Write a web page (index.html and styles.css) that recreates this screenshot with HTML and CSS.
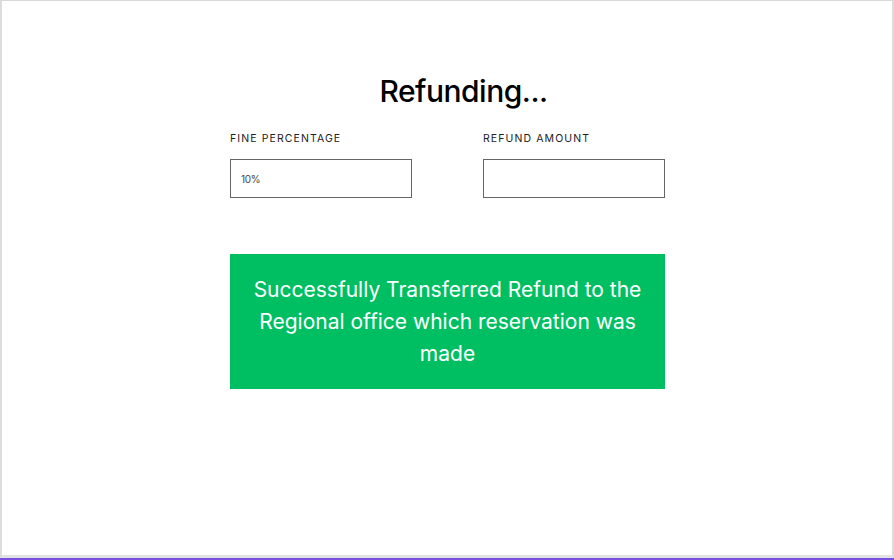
FILE: index.html
```html
<!DOCTYPE html>
<html>
<head>
<meta charset="utf-8">
<link rel="stylesheet" href="styles.css">
</head>
<body>
<div class="frame">
  <div class="content">
    <h1 class="title">Refunding...</h1>
    <div class="fields">
      <div class="field">
        <label class="label">FINE PERCENTAGE</label>
        <div class="input">10%</div>
      </div>
      <div class="field">
        <label class="label">REFUND AMOUNT</label>
        <div class="input"></div>
      </div>
    </div>
    <div class="notice">Successfully Transferred Refund to the Regional office which reservation was made</div>
  </div>
</div>
</body>
</html>
```
FILE: styles.css
```css
html, body {
  margin: 0;
  padding: 0;
  width: 894px;
  height: 560px;
  overflow: hidden;
  background: #ffffff;
}
body {
  border-bottom: 2px solid #7b4fe0;
  box-sizing: border-box;
}
.frame {
  box-sizing: border-box;
  height: 558px;
  border-top: 1px solid #d9d9d9;
  border-left: 2px solid #dcdcdc;
  border-right: 2px solid #dcdcdc;
  border-bottom: 3px solid #e2e2e2;
  background: #fff;
  display: flex;
  justify-content: center;
}
.content {
  width: 435px;
  margin-left: 1px;
  display: flex;
  flex-direction: column;
}
.title {
  margin: 68px 0 0 32px;
  text-align: center;
  font-family: "Inter", "Open Sans", sans-serif;
  font-weight: 500;
  font-size: 30px;
  line-height: 44px;
  color: #000;
  letter-spacing: -0.5px;
}
.fields {
  margin-top: 19px;
  display: flex;
  justify-content: space-between;
}
.field {
  width: 182px;
  display: flex;
  flex-direction: column;
}
.label {
  font-family: "Inter", sans-serif;
  font-size: 10.5px;
  letter-spacing: 1.1px;
  color: #222;
  line-height: 14px;
}
.input {
  margin-top: 13px;
  box-sizing: border-box;
  height: 39px;
  border: 1px solid #666;
  padding: 0 10px;
  display: flex;
  align-items: center;
  font-family: "Inter", sans-serif;
  font-size: 10px;
  color: #444;
  letter-spacing: -0.3px;
}
.notice {
  margin-top: 56px;
  background: #00bf63;
  color: #fff;
  text-align: center;
  font-family: "Inter", sans-serif;
  font-size: 21px;
  line-height: 32px;
  padding: 20px 20px 19px;
  letter-spacing: 0;
}
```
